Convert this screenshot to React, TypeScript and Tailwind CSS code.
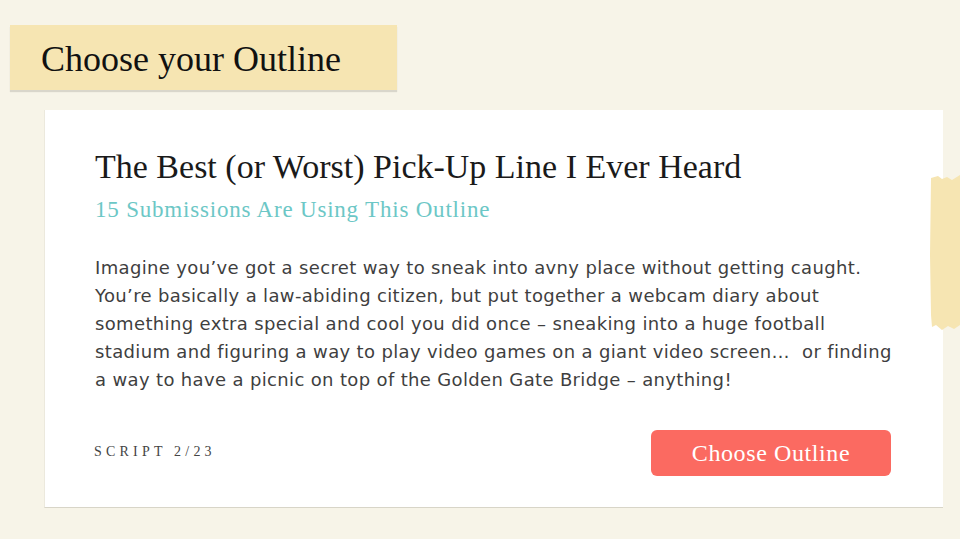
import React from "react";

const serif = { fontFamily: '"Liberation Serif", "Times New Roman", serif' };

export default function App() {
  return (
    <div className="w-[960px] h-[539px] bg-[#f7f4e8] overflow-hidden relative">
      <div className="pt-[25px] pl-[10px]">
        <div className="w-[387px] h-[65px] bg-[#f6e5b2] shadow-[0_2px_1px_rgba(0,0,0,0.12)] flex items-center pl-[31px]">
          <span className="text-[36px] text-[#111] leading-none mt-[2px]" style={serif}>
            Choose your Outline
          </span>
        </div>
      </div>
      <div className="ml-[44px] mt-[20px] w-[899px] h-[398px] bg-white border-l border-[#ece9dd] border-b border-b-[#d8d5c8] pl-[50px] pr-[48px] pt-[38px] flex flex-col">
        <h1 className="text-[34px] leading-[38px] text-[#1a1a1a]" style={serif}>
          The Best (or Worst) Pick-Up Line I Ever Heard
        </h1>
        <p className="text-[23px] leading-[26px] tracking-[0.8px] text-[#6cc7c6] mt-[11px]" style={serif}>
          15 Submissions Are Using This Outline
        </p>
        <p
          className="text-[18px] leading-[28px] tracking-[0.35px] text-[#3f3f3f] mt-[31px]"
          style={{ fontFamily: '"DejaVu Sans", "Open Sans", sans-serif' }}
        >
          Imagine you’ve got a secret way to sneak into avny place without getting caught. You’re basically a law-abiding citizen, but put together a webcam diary about something extra special and cool you did once – sneaking into a huge football stadium and figuring a way to play video games on a giant video screen…&nbsp; or finding a way to have a picnic on top of the Golden Gate Bridge – anything!
        </p>
        <div className="flex items-center justify-between mt-[36px] pr-[4px]">
          <span className="text-[14px] tracking-[4.2px] text-[#444] -mt-[4px] -ml-[1px]" style={serif}>
            SCRIPT 2/23
          </span>
          <button className="w-[240px] h-[46px] rounded-[6px] bg-[#fb6a61] text-white text-[24px] tracking-[0.6px] flex items-center justify-center" style={serif}>
            Choose Outline
          </button>
        </div>
      </div>
      <svg className="absolute left-[930px] top-[175px]" width="30" height="156" viewBox="0 0 30 156">
        <path d="M1 3 L8 1 L12 4 L17 2 L22 5 L30 0 L30 150 L24 154 L18 151 L12 155 L6 150 L2 152 L1 140 L0 80 Z" fill="#f6e5b2" />
      </svg>
    </div>
  );
}
